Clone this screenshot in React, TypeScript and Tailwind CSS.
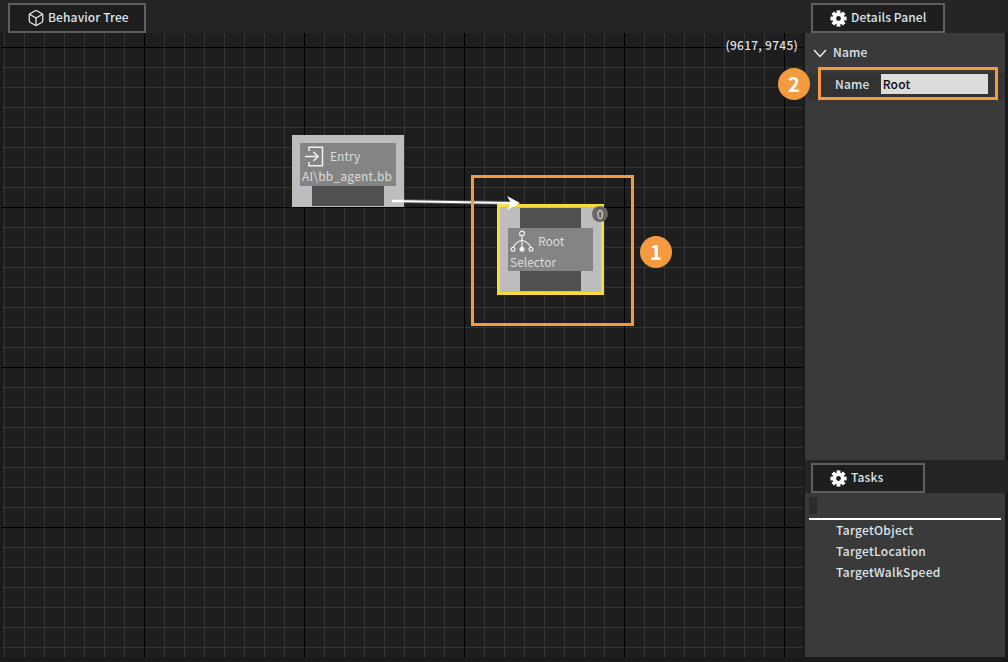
import { Box } from "lucide-react";

const font = "font-['Noto_Sans_CJK_SC','Noto_Sans',sans-serif]";

function Gear() {
  const angles = [0, 45, 90, 135];
  return (
    <svg width="17" height="17" viewBox="0 0 17 17" className="shrink-0">
      {angles.map((a) => (
        <rect key={a} x="6.6" y="0.4" width="3.8" height="16.2" fill="#fff" transform={`rotate(${a} 8.5 8.5)`} />
      ))}
      <circle cx="8.5" cy="8.5" r="6" fill="#fff" />
      <circle cx="8.5" cy="8.5" r="2.4" fill="#1e1e1e" />
    </svg>
  );
}

function Tab({ icon, label, w, gap }: { icon: React.ReactNode; label: string; w: string; gap: string }) {
  return (
    <div className={`${w} ${gap} pl-[17px] h-[30px] border-2 border-[#5f5f5f] bg-[#1e1e1e] flex items-center text-[12px] font-medium tracking-[0.12px] text-[#dde3ea]`}>
      {icon}
      <span className="mb-[2px]">{label}</span>
    </div>
  );
}

function Canvas() {
  return (
    <div className="relative w-[801px] h-[624px] ml-[2px] overflow-hidden bg-[#1e1e1e] bg-[linear-gradient(#000_1px,transparent_1px),linear-gradient(90deg,#000_1px,transparent_1px),linear-gradient(#343434_1px,transparent_1px),linear-gradient(90deg,#343434_1px,transparent_1px)] bg-[size:160px_160px,160px_160px,20px_20px,20px_20px] bg-[position:0_14px,142px_0,0_14px,2px_0]">
      <span className="absolute right-[5px] top-[3px] text-[12px] font-medium tracking-[0.25px] text-[#dde3ea] leading-[17px]">(9617, 9745)</span>

      {/* Entry node */}
      <div className="absolute left-[290px] top-[102px] w-[112px] h-[72px] bg-[#bdbdbd] flex flex-col items-center pt-[8px]">
        <div className="w-[96px] h-[43px] bg-[#848484] flex flex-col text-[#dcdcdc] text-[12px]">
          <div className="h-[25px] flex items-center pl-[4px] gap-[6px]">
            <svg width="20" height="21" viewBox="0 0 20 21" fill="none" stroke="#f2f2f2" strokeWidth="1.5" className="mt-[2px] shrink-0">
              <path d="M5 5V1.2H18.5V19.8H5V16" />
              <path d="M1 10.5H14M9.5 6L14 10.5L9.5 15" />
            </svg>
            <span className="leading-none">Entry</span>
          </div>
          <span className="pl-[2px] leading-[16px] tracking-[0.22px]">AI\bb_agent.bb</span>
        </div>
        <div className="w-[72px] h-[20px] bg-[#505050]" />
      </div>

      {/* Root node */}
      <div className="absolute left-[495px] top-[171px] w-[107px] h-[91px] border-[3px] border-[#f5dc3c] bg-[#bdbdbd] flex flex-col items-center pt-[1px]">
        <div className="w-[61px] h-[20px] bg-[#505050]" />
        <div className="w-[85px] h-[43px] bg-[#848484] flex flex-col text-[#dcdcdc] text-[12px]">
          <div className="h-[26px] flex items-center pl-[2px] gap-[4px]">
            <svg width="24" height="24" viewBox="0 0 24 24" fill="none" stroke="#f0f0f0" strokeWidth="1.2" className="shrink-0">
              <circle cx="12" cy="4.5" r="2.4" />
              <path d="M12 7V19M12 11C8 12.5 4.5 15 3.2 18.5M12 11C16 12.5 19.5 15 20.8 18.5" />
              <circle cx="3" cy="20.3" r="1.9" />
              <circle cx="12" cy="20.3" r="1.9" fill="#f0f0f0" />
              <circle cx="21" cy="20.3" r="1.9" />
            </svg>
            <span className="leading-none">Root</span>
          </div>
          <span className="pl-[2px] leading-[16px]">Selector</span>
        </div>
        <div className="w-[61px] h-[20px] bg-[#505050]" />
        <div className="absolute left-[92px] top-[-1px] w-[16px] h-[16px] rounded-full bg-[#666666] text-[#dddddd] text-[12px] leading-[16px] text-center">0</div>
      </div>

      {/* Connection */}
      <svg className="absolute left-0 top-0" width="801" height="624" fill="none">
        <path d="M390 168L510 170" stroke="#ffffff" strokeOpacity="0.25" strokeWidth="4" />
        <path d="M390 168L510 170" stroke="#ffffff" strokeWidth="2" />
        <path d="M505 163L518 170L505 177L509 170Z" fill="#ffffff" />
      </svg>

      {/* Callout 1 */}
      <div className="absolute left-[469px] top-[142px] w-[163px] h-[151px] border-[3px] border-[#f59b3f]" />
      <div className="absolute left-[638px] top-[203px] w-[32px] h-[32px] rounded-full bg-[#f59b3f] text-white text-[20px] font-bold leading-[31px] text-center">1</div>
    </div>
  );
}

export default function App() {
  return (
    <div className={`${font} w-[1008px] h-[662px] bg-[#1a1a1a] flex overflow-hidden`}>
      <div className="w-[805px] flex flex-col">
        <div className="h-[33px] bg-[#252525] pl-[8px] pt-[3px]">
          <Tab w="w-[138px]" gap="gap-[3px]" label="Behavior Tree" icon={<Box size={18} strokeWidth={1.6} color="#f0f0f0" />} />
        </div>
        <Canvas />
      </div>
      <div className="w-[203px] flex flex-col">
        <div className="h-[33px] bg-[#252525] pl-[6px] pt-[3px]">
          <Tab w="w-[134px]" gap="gap-[4px]" label="Details Panel" icon={<Gear />} />
        </div>
        <div className="relative w-[200px] h-[427px] bg-[#3a3a3a] text-[12px] font-medium tracking-[0.2px] text-[#dde3ea]">
          <div className="h-[38px] flex items-center pl-[8px] gap-[6px]">
            <svg width="14" height="9" viewBox="0 0 14 9" fill="none" stroke="#eeeeee" strokeWidth="1.5" className="shrink-0 mt-[2px]">
              <path d="M1 1L7 7.5L13 1" />
            </svg>
            <span>Name</span>
          </div>
          <div className="h-[26px] mt-[2px] bg-[#333333]" />
          <div className="absolute left-[13px] top-[34px] w-[180px] h-[33px] border-[3px] border-[#f59b3f] flex items-center pl-[14px] gap-[11px]">
            <span>Name</span>
            <div className="w-[107px] h-[20px] bg-[#dcdcdc] text-[#0a0a0a] font-medium pl-[2px] leading-[20px]">Root</div>
          </div>
          <div className="absolute left-[-27px] top-[35px] w-[32px] h-[32px] rounded-full bg-[#f59b3f] text-white text-[20px] font-bold leading-[31px] text-center">2</div>
        </div>
        <div className="h-[33px] bg-[#252525] pl-[6px] pt-[3px]">
          <Tab w="w-[114px]" gap="gap-[4px]" label="Tasks" icon={<Gear />} />
        </div>
        <div className="w-[200px] h-[164px] bg-[#3a3a3a] pt-[4px] px-[4px] text-[12px] font-medium tracking-[0.3px] text-[#dde3ea]">
          <div className="w-[8px] h-[17px] bg-[#2c2c2c]" />
          <div className="h-[2px] mt-[4px] mb-[-1px] w-[192px] bg-white" />
          {["TargetObject", "TargetLocation", "TargetWalkSpeed"].map((t) => (
            <div key={t} className="pl-[27px] h-[21px] leading-[21px]">{t}</div>
          ))}
        </div>
      </div>
    </div>
  );
}
